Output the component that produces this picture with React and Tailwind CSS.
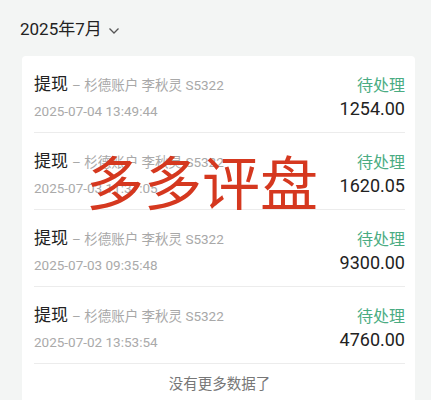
import React from "react";

const rows = [
  { date: "2025-07-04 13:49:44", amount: "1254.00" },
  { date: "2025-07-03 11:37:05", amount: "1620.05" },
  { date: "2025-07-03 09:35:48", amount: "9300.00" },
  { date: "2025-07-02 13:53:54", amount: "4760.00" },
];

export default function App() {
  return (
    <div
      className="relative w-[431px] h-[400px] overflow-hidden bg-[#f3f5f4]"
      style={{ fontFamily: 'Roboto, "Noto Sans CJK SC", sans-serif' }}
    >
      <div className="flex items-center gap-[6px] pl-[20px] pt-[4px] h-[56px]">
        <span className="text-[17px] text-[#222]">2025年7月</span>
        <svg width="12" height="8" viewBox="0 0 12 8" className="mt-[2px]">
          <path d="M1.5 1.5 L6 6 L10.5 1.5" fill="none" stroke="#555" strokeWidth="1.3" />
        </svg>
      </div>

      <div className="ml-[22px] mr-[16px] bg-white rounded-[4px] pl-[12px] pr-[10px]">
        {rows.map((r, i) => (
          <div key={i} className="flex justify-between h-[77px] border-b border-[#ececec] pt-[17px]">
            <div className="flex flex-col">
              <div className="flex items-baseline gap-[4px]">
                <span className="text-[17px] text-[#222] leading-[22px]">提现</span>
                <span className="text-[13.5px] text-[#a8a8a8]">– 杉德账户 李秋灵 S5322</span>
              </div>
              <span className="text-[13.5px] text-[#aaa] mt-[6px]">{r.date}</span>
            </div>
            <div className="flex flex-col items-end pt-[2px]">
              <span className="text-[16px] text-[#4aac82] leading-[22px]">待处理</span>
              <span className="text-[18px] text-[#222] leading-[22px] mt-[1px]">{r.amount}</span>
            </div>
          </div>
        ))}
        <div className="h-[42px] flex items-center justify-center text-[14.5px] text-[#777]">
          没有更多数据了
        </div>
      </div>

      <div className="absolute left-[86px] top-[150px] text-[58px] leading-[70px] text-[#d5381f]">
        多多评盘
      </div>
    </div>
  );
}
